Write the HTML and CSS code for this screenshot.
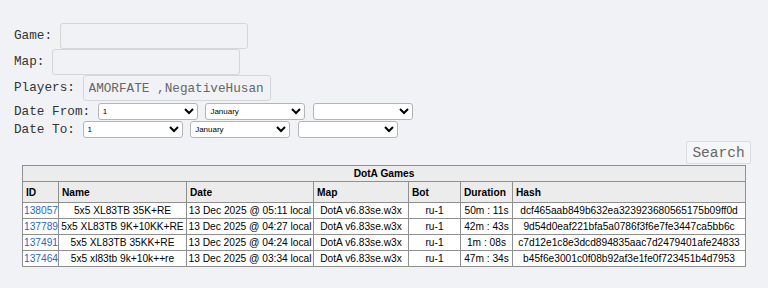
FILE: index.html
```html
<!DOCTYPE html>
<html lang="en">
<head>
  <meta charset="UTF-8">
  <title>DotA Games</title>
  <link rel="stylesheet" href="styles.css">
</head>
<body>

<form class="filters">
  <div class="row">Game: <input class="txt" type="text"></div>
  <div class="row">Map: <input class="txt" type="text"></div>
  <div class="row">Players: <input class="txt" type="text" value="AMORFATE ,NegativeHusan"></div>
  <div class="row date">Date From: <select class="sel"><option>1</option></select>
    <select class="sel"><option>January</option></select>
    <select class="sel"><option></option></select></div>
  <div class="row date">Date To: <select class="sel"><option>1</option></select>
    <select class="sel"><option>January</option></select>
    <select class="sel"><option></option></select></div>
  <div class="search-row"><button type="button" class="search">Search</button></div>
</form>

<table class="games">
  <colgroup>
    <col class="c-id"><col class="c-name"><col class="c-date"><col class="c-map">
    <col class="c-bot"><col class="c-dur"><col class="c-hash">
  </colgroup>
  <thead>
    <tr><th colspan="7" class="cap">DotA Games</th></tr>
    <tr><th>ID</th><th>Name</th><th>Date</th><th>Map</th><th>Bot</th><th>Duration</th><th>Hash</th></tr>
  </thead>
  <tbody>
    <tr><td class="id"><a href="#">138057</a></td><td>5x5 XL83TB 35K+RE</td><td>13 Dec 2025 @ 05:11 local</td><td>DotA v6.83se.w3x</td><td>ru-1</td><td>50m : 11s</td><td>dcf465aab849b632ea323923680565175b09ff0d</td></tr>
    <tr><td class="id"><a href="#">137789</a></td><td>5x5 XL83TB 9K+10KK+RE</td><td>13 Dec 2025 @ 04:27 local</td><td>DotA v6.83se.w3x</td><td>ru-1</td><td>42m : 43s</td><td>9d54d0eaf221bfa5a0786f3f6e7fe3447ca5bb6c</td></tr>
    <tr><td class="id"><a href="#">137491</a></td><td>5x5 XL83TB 35KK+RE</td><td>13 Dec 2025 @ 04:24 local</td><td>DotA v6.83se.w3x</td><td>ru-1</td><td>1m : 08s</td><td>c7d12e1c8e3dcd894835aac7d2479401afe24833</td></tr>
    <tr><td class="id"><a href="#">137464</a></td><td>5x5 xl83tb 9k+10k++re</td><td>13 Dec 2025 @ 03:34 local</td><td>DotA v6.83se.w3x</td><td>ru-1</td><td>47m : 34s</td><td>b45f6e3001c0f08b92af3e1fe0f723451b4d7953</td></tr>
  </tbody>
</table>

</body>
</html>
```
FILE: styles.css
```css
body { margin: 0; padding: 23px 0 0 14px; background: #f1f2f6; font-family: "Liberation Mono", "DejaVu Sans Mono", monospace; font-size: 12.7px; color: #333; }
.filters { margin: 0; }
.row { height: 26px; line-height: 26px; white-space: nowrap; }
.row.date { height: 18px; line-height: 18px; }
.row:nth-child(4) { margin-top: 2px; }
.txt { box-sizing: border-box; width: 188px; height: 26px; margin: 0; padding: 0 5px; vertical-align: top; border: 1px solid #d4d6da; border-radius: 3px; background: #f1f2f6; font-family: "Liberation Mono", monospace; font-size: 12.7px; color: #666; }
.sel { box-sizing: border-box; width: 100px; height: 17px; margin: 0; vertical-align: top; border: 1px solid #b5b5b5; border-radius: 3px; background: #fff; font-family: "Liberation Sans", Arial, sans-serif; font-size: 8px; color: #000; }
.search-row { display: flex; justify-content: flex-end; padding: 2px 17px 1px 0; }
.search { box-sizing: border-box; width: 65px; height: 23px; padding: 0; border: 1px solid #dcdde0; border-radius: 2px; background: #f5f6f8; font-family: "Liberation Mono", monospace; font-size: 14.5px; color: #666; }
.games { width: 723px; margin: 0 0 0 8px; border-collapse: collapse; table-layout: fixed; font-family: "Liberation Sans", Arial, sans-serif; font-size: 10.2px; color: #000; }
.games th, .games td { border: 1px solid #8f8f8f; }
.games th { background: #ececec; text-align: left; font-weight: bold; height: 20px; padding: 0 3px; }
.games th.cap { text-align: center; height: 15px; line-height: 13px; }
.games td { background: #fff; text-align: center; height: 15px; line-height: 13px; padding: 0 1px; white-space: nowrap; overflow: hidden; }
.games td.id { text-align: left; }
.games a { color: #2866c9; text-decoration: none; }
.c-id { width: 36px; }
.c-name { width: 128px; }
.c-date { width: 127px; }
.c-map { width: 95px; }
.c-bot { width: 52px; }
.c-dur { width: 52px; }
.c-hash { width: 233px; }
```
